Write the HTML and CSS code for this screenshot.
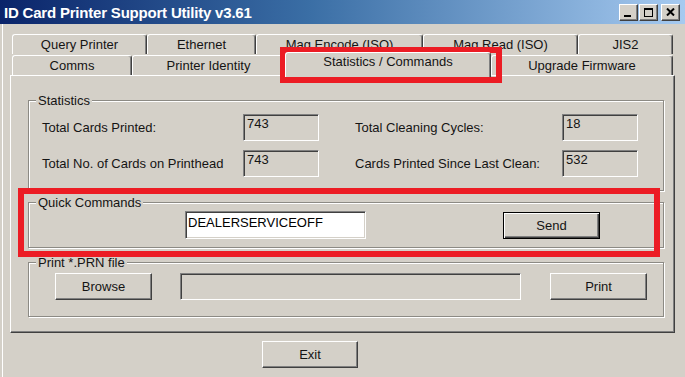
FILE: index.html
```html
<!DOCTYPE html>
<html lang="en">
<head>
    <meta charset="UTF-8">
    <meta name="viewport" content="width=device-width, initial-scale=1.0">
    <title>ID Card Printer Support Utility v3.61</title>
    <link rel="stylesheet" href="styles.css">
</head>
<body>
    <div class="window">
        <div class="titlebar">
            <span class="title">ID Card Printer Support Utility v3.61</span>
            <div class="controls">
                <span class="ctl ctl-min"><span class="min-bar"></span></span>
                <span class="ctl ctl-max"><span class="max-box"></span></span>
                <span class="ctl ctl-close">
                    <svg width="9" height="8" viewBox="0 0 9 8">
                        <path d="M1 0.5 L8 7.5 M8 0.5 L1 7.5" stroke="#000" stroke-width="2"/>
                    </svg>
                </span>
            </div>
        </div>

        <div class="client">
            <div class="tabs">
                <div class="tab-row back">
                    <div class="tab">Query Printer</div>
                    <div class="tab">Ethernet</div>
                    <div class="tab">Mag Encode (ISO)</div>
                    <div class="tab">Mag Read (ISO)</div>
                    <div class="tab">JIS2</div>
                </div>
                <div class="tab-row front">
                    <div class="tab">Comms</div>
                    <div class="tab">Printer Identity</div>
                    <div class="tab active">Statistics / Commands</div>
                    <div class="tab">Upgrade Firmware</div>
                </div>
            </div>

            <div class="panel">
                <fieldset class="group stats">
                    <legend>Statistics</legend>
                    <div class="stats-grid">
                        <span class="lbl">Total Cards Printed:</span>
                        <span class="field">743</span>
                        <span class="lbl">Total Cleaning Cycles:</span>
                        <span class="field">18</span>

                        <span class="lbl">Total No. of Cards on Printhead</span>
                        <span class="field">743</span>
                        <span class="lbl">Cards Printed Since Last Clean:</span>
                        <span class="field">532</span>
                    </div>
                </fieldset>

                <fieldset class="group quick">
                    <legend>Quick Commands</legend>
                    <div class="quick-row">
                        <input class="cmd" type="text" value="DEALERSERVICEOFF">
                        <button class="btn btn-default btn-send">Send</button>
                    </div>
                </fieldset>

                <fieldset class="group print">
                    <legend>Print *.PRN file</legend>
                    <div class="print-row">
                        <button class="btn">Browse</button>
                        <span class="path"></span>
                        <button class="btn btn-print">Print</button>
                    </div>
                </fieldset>
            </div>

            <div class="footer">
                <button class="btn">Exit</button>
            </div>
        </div>

        <!-- red annotation boxes drawn over the dialog -->
        <div class="mark mark-tab"></div>
        <div class="mark mark-quick"></div>
    </div>
</body>
</html>
```

FILE: styles.css
```css
body {
    margin: 0;
    background-color: #d4d0c8;
    font-family: "Liberation Sans", Arial, sans-serif;
    font-size: 13px;
    color: #141414;
}

.window {
    position: relative;
    width: 685px;
    height: 377px;
    overflow: hidden;
    box-shadow: inset 2px 0 #d4d0c8, inset 3px 0 #ffffff;
}

/* title bar */
.titlebar {
    height: 24px;
    display: flex;
    align-items: center;
    padding-left: 4px;
    background: linear-gradient(to right, #0a246a 0%, #3a6ea5 45%, #a6caf0 100%);
}

.title {
    color: #ffffff;
    font-weight: bold;
    font-size: 15px;
    letter-spacing: -0.2px;
}

.controls {
    margin-left: auto;
    margin-right: 5px;
    display: flex;
    gap: 1px;
}

.ctl {
    width: 17px;
    height: 15px;
    background: #d4d0c8;
    border: 1px solid;
    border-color: #ffffff #404040 #404040 #ffffff;
    box-shadow: inset -1px -1px #808080;
    display: flex;
    align-items: center;
    justify-content: center;
}

.ctl-close {
    margin-left: 2px;
}

.min-bar {
    width: 7px;
    height: 2px;
    background: #000;
    margin-top: 8px;
    margin-right: 2px;
}

.max-box {
    width: 7px;
    height: 6px;
    border: 1px solid #000;
    border-top-width: 2px;
}

/* tabs */
.client {
    padding-top: 10px;
}

.tab-row {
    display: grid;
    height: 20px;
    margin-left: 12px;
}

.back {
    grid-template-columns: 135px 109px 167px 155px 95px;
}

.front {
    grid-template-columns: 120px 153px 206px 182px;
    margin-top: 1px;
}

.tab {
    box-sizing: border-box;
    height: 20px;
    border: 1px solid;
    border-bottom: none;
    border-color: #ffffff #404040 transparent #ffffff;
    border-radius: 3px 3px 0 0;
    box-shadow: inset -1px 0 #808080;
    text-align: center;
    line-height: 19px;
    white-space: nowrap;
}

.tab.active {
    position: relative;
    z-index: 1;
    height: 25px;
    margin-top: -3px;
    background: #d4d0c8;
    line-height: 18px;
}

/* tab page */
.panel {
    box-sizing: border-box;
    width: 665px;
    height: 258px;
    margin-left: 10px;
    border: 1px solid;
    border-color: #ffffff #404040 #404040 #ffffff;
    box-shadow: inset -1px -1px #808080;
    padding: 17px 0 0 17px;
}

.group {
    box-sizing: border-box;
    width: 636px;
    margin: 0;
    padding: 0;
    border: 1px solid #8c8a84;
    box-shadow: 1px 1px #ffffff, inset 1px 1px #ffffff;
}

.group legend {
    margin-left: 7px;
    padding: 0 2px;
    line-height: 15px;
    background: #d4d0c8;
}

.stats-grid {
    display: grid;
    grid-template-columns: 201px 112px 207px 76px;
    row-gap: 9px;
    align-items: center;
    padding: 6px 0 13px 13px;
}

.field {
    box-sizing: border-box;
    width: 76px;
    height: 27px;
    border: 1px solid;
    border-color: #808080 #ffffff #ffffff #808080;
    box-shadow: inset 1px 1px #404040;
    padding: 2px 3px;
    line-height: 14px;
}

.quick {
    margin-top: 4px;
}

.quick-row {
    display: flex;
    align-items: center;
    padding: 1px 0 8px 156px;
}

.cmd {
    box-sizing: border-box;
    width: 181px;
    height: 28px;
    margin: 0;
    padding: 0 2px 5px;
    background: #ffffff;
    border: 1px solid;
    border-color: #808080 #ffffff #ffffff #808080;
    box-shadow: inset 1px 1px #404040, inset -1px -1px #d4d0c8;
    font-family: inherit;
    font-size: 13px;
    color: #000;
    outline: none;
}

.print {
    margin-top: 7px;
}

.print-row {
    display: flex;
    align-items: center;
    padding: 3px 0 16px 26px;
}

.path {
    box-sizing: border-box;
    width: 341px;
    height: 27px;
    margin-left: 28px;
    border: 1px solid;
    border-color: #808080 #ffffff #ffffff #808080;
    box-shadow: inset 1px 1px #404040;
}

/* buttons */
.btn {
    box-sizing: border-box;
    width: 97px;
    height: 27px;
    margin: 0;
    padding: 0;
    background: #d4d0c8;
    border: 1px solid;
    border-color: #ffffff #404040 #404040 #ffffff;
    box-shadow: inset -1px -1px #808080;
    font-family: inherit;
    font-size: 13px;
    color: #141414;
}

.btn-default {
    border-color: #000000;
    box-shadow: inset 1px 1px #ffffff, inset -1px -1px #404040, inset -2px -2px #808080;
}

.btn-send {
    margin-left: 137px;
}

.btn-print {
    margin-left: 29px;
}

.footer {
    padding: 8px 0 0 262px;
}

.footer .btn {
    width: 96px;
}

/* red highlight boxes */
.mark {
    position: absolute;
    box-sizing: border-box;
    border: 6px solid #ec1c24;
}

.mark-tab {
    left: 280px;
    top: 47px;
    width: 222px;
    height: 36px;
}

.mark-quick {
    left: 18px;
    top: 188px;
    width: 642px;
    height: 69px;
}
```
